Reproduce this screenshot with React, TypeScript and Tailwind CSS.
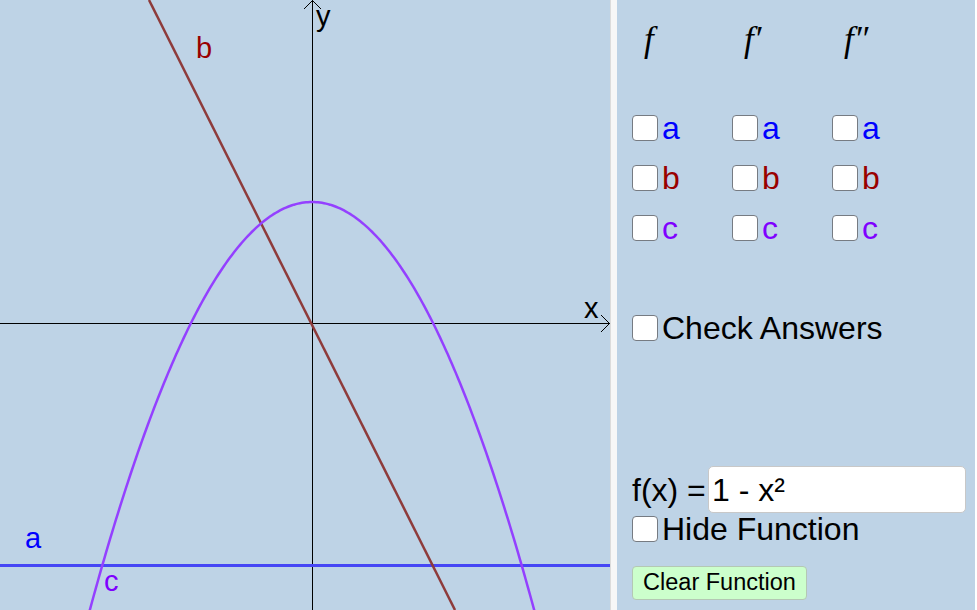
import React from 'react';

const W = 610;
const H = 610;
const OX = 312;
const OY = 323;
const U = 121;

function parabola() {
  const pts: string[] = [];
  for (let px = 60; px <= 565; px += 2) {
    const x = (px - OX) / U;
    const y = 1 - x * x;
    pts.push(`${px},${(OY - y * U).toFixed(2)}`);
  }
  return 'M' + pts.join(' L');
}

function Graph() {
  return (
    <svg width={W} height={H} viewBox={`0 0 ${W} ${H}`} className="block">
      <line x1={0} y1={OY + 0.5} x2={W} y2={OY + 0.5} stroke="#000" strokeWidth={1} />
      <polyline points={`601,315 609.5,323.5 601,332`} fill="none" stroke="#000" strokeWidth={1} />
      <line x1={OX + 0.5} y1={0} x2={OX + 0.5} y2={H} stroke="#000" strokeWidth={1} />
      <polyline points={`304,9 312.5,0.5 321,9`} fill="none" stroke="#000" strokeWidth={1} />

      <line x1={0} y1={565.5} x2={W} y2={565.5} stroke="#4646f5" strokeWidth={3} />
      <line x1={149} y1={0} x2={455} y2={610} stroke="#8e3b3b" strokeWidth={2.5} />
      <path d={parabola()} fill="none" stroke="#9440ff" strokeWidth={2.5} />

      <g style={{ fontFamily: '"Liberation Sans", Arial, sans-serif' }} fontSize={29}>
        <text x={584} y={318} fill="#000">x</text>
        <text x={316} y={26} fill="#000">y</text>
        <text x={196} y={58} fill="#990000">b</text>
        <text x={25} y={548} fill="#0000ff">a</text>
        <text x={104} y={591} fill="#7f00ff">c</text>
      </g>
    </svg>
  );
}

function Box() {
  return <span className="inline-block w-[26px] h-[26px] shrink-0 rounded-[4px] border-[1.5px] border-[#767b82] bg-white" />;
}

const rows = [
  { l: 'a', c: 'text-[#0000ff]' },
  { l: 'b', c: 'text-[#990000]' },
  { l: 'c', c: 'text-[#7f00ff]' },
];

export default function App() {
  return (
    <div className="flex w-[977px] h-[610px] overflow-hidden bg-white font-['Liberation_Sans',Arial,sans-serif] text-black">
      <div className="w-[610px] h-full bg-[#bed3e6]">
        <Graph />
      </div>
      <div className="w-[7px] h-full bg-[#f7f7f7] border-l border-[#dcdcdc]" />
      <div className="w-[358px] h-full bg-[#bed3e6] pl-[15px] flex flex-col">
        <div className="h-[103px] grid grid-cols-[100px_100px_100px] pt-[22px] font-['Liberation_Serif','Times_New_Roman',serif] italic text-[35px] leading-none">
          <span className="pl-[12px]">f</span>
          <span className="pl-[12px]">f′</span>
          <span className="pl-[12px]">f″</span>
        </div>
        <div className="grid grid-cols-[100px_100px_100px] text-[32px] leading-none">
          {rows.map((r) =>
            [0, 1, 2].map((i) => (
              <div key={r.l + i} className="h-[50px] flex items-center gap-[4px]">
                <Box />
                <span className={r.c}>{r.l}</span>
              </div>
            ))
          )}
        </div>
        <div className="mt-[50px] h-[50px] flex items-center gap-[4px] text-[32px] leading-none">
          <Box />
          <span>Check Answers</span>
        </div>
        <div className="mt-[113px] h-[47px] flex items-center text-[32px] leading-none">
          <span className="w-[76px] shrink-0">f(x) =</span>
          <div className="w-[258px] h-[47px] bg-white rounded-[5px] border border-[#c8c8c8] flex items-center pl-[3px]">
            1 - x²
          </div>
        </div>
        <div className="mt-[3px] h-[26px] flex items-center gap-[4px] text-[32px] leading-none">
          <Box />
          <span>Hide Function</span>
        </div>
        <div className="mt-[24px]">
          <button className="h-[34px] w-[175px] rounded-[4px] bg-[#ccffcc] border border-[#b4c8b4] text-[23.5px] leading-none text-black">
            Clear Function
          </button>
        </div>
      </div>
      <div className="w-[2px] h-full bg-white" />
    </div>
  );
}
